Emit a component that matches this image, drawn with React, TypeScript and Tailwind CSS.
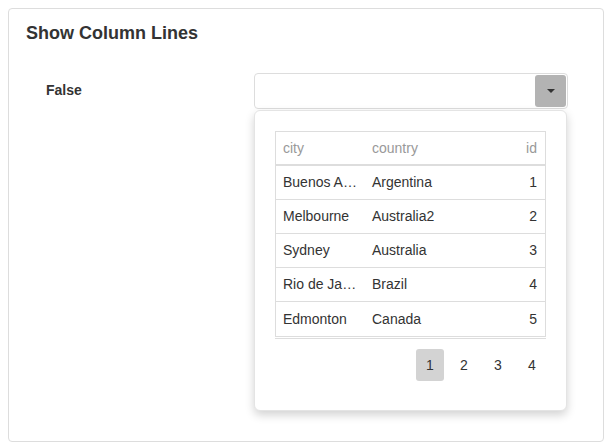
const rows = [
  { city: 'Buenos Aires', country: 'Argentina', id: 1 },
  { city: 'Melbourne', country: 'Australia2', id: 2 },
  { city: 'Sydney', country: 'Australia', id: 3 },
  { city: 'Rio de Janeiro', country: 'Brazil', id: 4 },
  { city: 'Edmonton', country: 'Canada', id: 5 },
];

export default function App() {
  return (
    <div className="h-[448px] w-[612px] bg-white p-2 font-['Liberation_Sans',Arial,sans-serif] text-[14px] text-[#333]">
      <div className="h-[434px] w-[596px] rounded-[4px] border border-[#dddddd] bg-white">
        {/* Title */}
        <h2 className="pl-[17px] pt-[14px] text-[18px] font-bold leading-[21px] text-[#333]">
          Show Column Lines
        </h2>

        <div className="mt-[29px] flex">
          <div className="w-[245px] pl-[37px] pt-[8px] font-bold leading-[18px]">False</div>

          <div className="w-[314px]">
            {/* Dropdown input */}
            <div className="flex h-[36px] items-center justify-end rounded-[4px] border border-[#dddddd] bg-white pr-[1px]">
              <button className="flex h-[32px] w-[31px] items-center justify-center rounded-[3px] bg-[#b3b3b3]">
                <svg width="8" height="4" viewBox="0 0 8 4">
                  <path d="M0 0 L8 0 L4 4 Z" fill="#333" />
                </svg>
              </button>
            </div>

            {/* Popup */}
            <div className="mt-[1px] h-[301px] w-[313px] rounded-[6px] border border-[#e4e4e4] bg-white px-[20px] pt-[20px] shadow-[0_4px_10px_rgba(0,0,0,0.18)]">
              <div className="border border-[#dddddd]">
                <div className="flex h-[34px] items-center border-b-2 border-[#dddddd] text-[#999]">
                  <div className="w-[89px] pl-[7px]">city</div>
                  <div className="flex-1 pl-[7px]">country</div>
                  <div className="pr-[8px]">id</div>
                </div>
                {rows.map((r, i) => (
                  <div
                    key={r.id}
                    className={`flex h-[34px] items-center ${i < rows.length - 1 ? 'border-b border-[#dddddd]' : ''}`}
                  >
                    <div className="w-[89px] truncate pl-[7px] pr-[6px]">{r.city}</div>
                    <div className="flex-1 pl-[7px]">{r.country}</div>
                    <div className="pr-[8px]">{r.id}</div>
                  </div>
                ))}
              </div>
              <div className="mt-[1px] h-[1px] bg-[#dddddd]" />

              {/* Pagination */}
              <div className="mt-[10px] flex justify-end gap-[6px]">
                {[1, 2, 3, 4].map((p) => (
                  <div
                    key={p}
                    className={`flex h-[32px] w-[28px] items-center justify-center rounded-[3px] ${p === 1 ? 'bg-[#d3d3d3]' : ''}`}
                  >
                    {p}
                  </div>
                ))}
              </div>
            </div>
          </div>
        </div>
      </div>
    </div>
  );
}
